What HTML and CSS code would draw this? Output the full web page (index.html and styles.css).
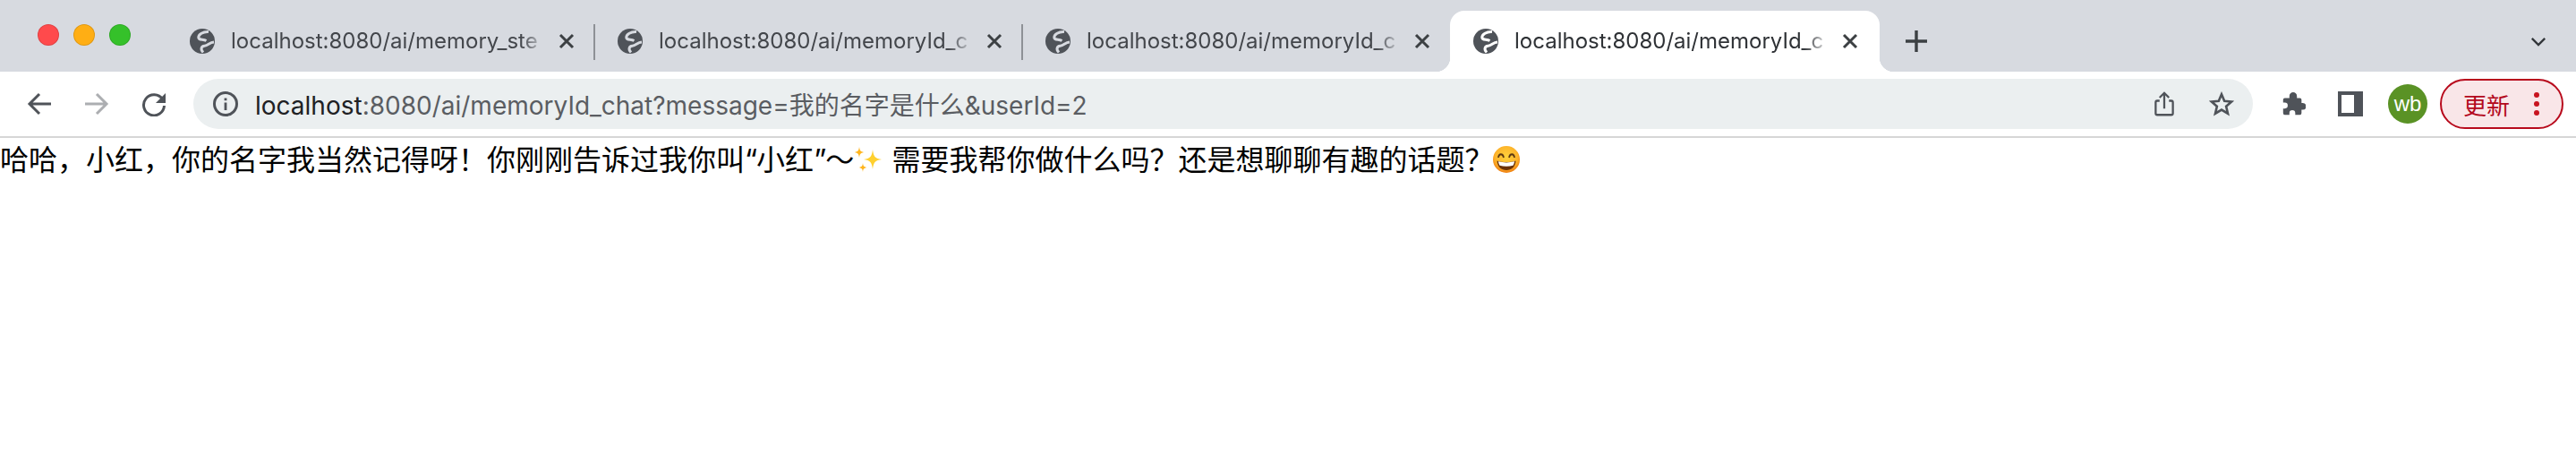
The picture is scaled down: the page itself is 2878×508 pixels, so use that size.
FILE: index.html
```html
<!DOCTYPE html>
<html lang="zh-CN">
<head>
<meta charset="utf-8">
<title>localhost:8080/ai/memoryId_chat</title>
<link rel="stylesheet" href="styles.css">
</head>
<body>
<svg class="defs" width="0" height="0" aria-hidden="true">
  <symbol id="globe" viewBox="0 0 28 28">
    <circle cx="14" cy="14" r="14" fill="#4f5359"/>
    <path class="land" d="M21 3.500C15 3 9.500 6.500 9.800 10c.3 3 5.200 1.500 8.700 3.500M27 15c-5 .2-6.500 4-10.500 4.200C13 19.500 11.500 23 15 26.500" fill="none" stroke-width="3"/>
  </symbol>
  <symbol id="x" viewBox="0 0 24 24">
    <path d="M5 5l14 14M19 5L5 19" fill="none" stroke="currentColor" stroke-width="3"/>
  </symbol>
</svg>

<header class="tabstrip">
  <div class="lights">
    <span class="light red"></span>
    <span class="light amber"></span>
    <span class="light green"></span>
  </div>
  <div class="tabs">
    <div class="tab">
      <svg class="favicon"><use href="#globe"/></svg>
      <span class="tab-title">localhost:8080/ai/memory_ste</span>
      <svg class="tab-close"><use href="#x"/></svg>
    </div>
    <span class="tab-sep"></span>
    <div class="tab">
      <svg class="favicon"><use href="#globe"/></svg>
      <span class="tab-title">localhost:8080/ai/memoryId_c</span>
      <svg class="tab-close"><use href="#x"/></svg>
    </div>
    <span class="tab-sep"></span>
    <div class="tab">
      <svg class="favicon"><use href="#globe"/></svg>
      <span class="tab-title">localhost:8080/ai/memoryId_c</span>
      <svg class="tab-close"><use href="#x"/></svg>
    </div>
    <div class="tab active">
      <svg class="favicon"><use href="#globe"/></svg>
      <span class="tab-title">localhost:8080/ai/memoryId_c</span>
      <svg class="tab-close"><use href="#x"/></svg>
    </div>
    <svg class="new-tab" viewBox="0 0 28 28"><path d="M14 2v24M2 14h24" fill="none" stroke="currentColor" stroke-width="3.400"/></svg>
  </div>
  <svg class="tab-menu" viewBox="0 0 20 12"><path d="M2 2l8 8 8-8" fill="none" stroke="currentColor" stroke-width="2.600"/></svg>
</header>

<nav class="toolbar">
  <button class="tool"><svg class="ico" viewBox="0 0 28 28"><path d="M27 14H3M14 3L3 14l11 11" fill="none" stroke="currentColor" stroke-width="3"/></svg></button>
  <button class="tool off"><svg class="ico" viewBox="0 0 28 28"><path d="M1 14h24M14 3l11 11-11 11" fill="none" stroke="currentColor" stroke-width="3"/></svg></button>
  <button class="tool"><svg class="ico" viewBox="0 0 28 28"><path d="M23.600 9A11.500 11.500 0 1 0 25.500 16" fill="none" stroke="currentColor" stroke-width="3"/><path d="M27 2v11H16z" fill="currentColor"/></svg></button>
  <div class="omnibox">
    <svg class="ico info" viewBox="0 0 28 28"><circle cx="14" cy="14" r="12.500" fill="none" stroke="currentColor" stroke-width="3"/><path d="M12.600 12.500h2.800V21h-2.800zM12.600 7.500h2.800v2.800h-2.800z" fill="currentColor"/></svg>
    <div class="url"><span class="host">localhost</span>:8080/ai/memoryId_chat?message=<span class="cjk">我的名字是什么</span>&amp;userId=2</div>
    <button class="tool"><svg class="ico" viewBox="0 0 28 32"><path d="M8 12H5a2 2 0 0 0-2 2v14a2 2 0 0 0 2 2h18a2 2 0 0 0 2-2V14a2 2 0 0 0-2-2h-3M14 22V3M8 8l6-6 6 6" fill="none" stroke="currentColor" stroke-width="2.600"/></svg></button>
    <button class="tool"><svg class="ico" viewBox="0 0 30 30"><path d="M15 3.500l3.400 8 8.600.8-6.500 5.700 2 8.500-7.500-4.500-7.500 4.500 2-8.500L3 12.300l8.600-.8z" fill="none" stroke="currentColor" stroke-width="2.800" stroke-linejoin="miter"/></svg></button>
  </div>
  <div class="actions">
    <button class="tool"><svg class="ico" viewBox="0 0 28 30"><path d="M2 10a2 2 0 0 1 2-2h5.500V5.500a4.500 4.500 0 0 1 9 0V8H22a2 2 0 0 1 2 2v4h1.500a4 4 0 0 1 0 8H24v4a2 2 0 0 1-2 2h-5.500v-2a3.500 3.500 0 0 0-7 0v2H4a2 2 0 0 1-2-2v-5.500h2a3.500 3.500 0 0 0 0-7H2z" fill="currentColor"/></svg></button>
    <button class="tool"><span class="panel"></span></button>
    <button class="tool"><span class="avatar">wb</span></button>
    <button class="update">更新<span class="dots"><i></i><i></i><i></i></span></button>
  </div>
</nav>

<main class="content">哈哈，小红，你的名字我当然记得呀！你刚刚告诉过我你叫<span class="quote">“</span>小红<span class="quote">”</span>～<svg class="emoji sparkles" viewBox="0 0 35 32"><path d="M21 3c.9 7.500 2.500 10 10 11-7.500 1-9.100 3.500-10 11-.9-7.500-2.500-10-10-11 7.500-1 9.100-3.500 10-11z" fill="#ffd02e"/><path d="M6 0c.6 4 1.200 5 5 6-3.800 1-4.400 2-5 6-.6-4-1.200-5-5-6 3.800-1 4.400-2 5-6zM10 18c.5 3.500 1 4.200 4.500 5-3.500.8-4 1.500-4.500 5-.5-3.500-1-4.200-4.500-5 3.500-.8 4-1.500 4.500-5z" fill="#ffb51f"/></svg> 需要我帮你做什么吗？还是想聊聊有趣的话题？<svg class="emoji grin" viewBox="0 0 30 30"><defs><radialGradient id="face" cx="50%" cy="40%" r="60%"><stop offset="0" stop-color="#ffd23c"/><stop offset=".7" stop-color="#fdb32a"/><stop offset="1" stop-color="#ee7d10"/></radialGradient></defs><circle cx="15" cy="15" r="15" fill="url(#face)"/><path d="M6 13c.6-5 5-5 6 0M18 13c1-5 5.400-5 6 0" fill="none" stroke="#5e3a12" stroke-width="1.800"/><path d="M4.500 16.500c6 2 15 2 21 0-.5 7-5 10.500-10.500 10.500S5 23.500 4.500 16.500z" fill="#6b3208"/><path d="M6 17.300c5.500 1.500 12.500 1.500 18 0-.2 2-.8 3.400-1.500 4.500-4.500 1.200-10.500 1.200-15 0-.7-1.100-1.300-2.500-1.500-4.500z" fill="#fff"/></svg></main>
</body>
</html>
```
FILE: styles.css
```css
* { box-sizing: border-box; }
html, body { margin: 0; padding: 0; background: #fff; }
body { width: 2878px; height: 508px; overflow: hidden; font-family: Inter, "Noto Sans CJK SC", sans-serif; }
.defs { display: block; height: 0; }

.tabstrip { height: 80px; background: #d7dae0; display: flex; position: relative; }
.lights { width: 186px; padding: 27px 0 0 42px; display: flex; gap: 16px; flex: none; }
.light { width: 24px; height: 24px; border-radius: 50%; border: 1px solid rgba(0,0,0,.12); }
.red { background: #ff4a4c; }
.amber { background: #ffae14; }
.green { background: #35c12a; }

.tabs { display: flex; align-items: flex-end; height: 80px; flex: 1; }
.tab { width: 478px; height: 68px; flex: none; display: flex; align-items: center; padding: 0 0 0 26px; position: relative; --land: #d7dae0; color: #43464b; }
.tab-sep { width: 2px; height: 40px; margin: 0 -1px 13px -1px; background: #8e9196; flex: none; position: relative; }
.favicon { width: 28px; height: 28px; flex: none; }
.land { stroke: var(--land); }
.tab-title { margin-left: 18px; width: 352px; flex: none; font-size: 24px; line-height: 32px; white-space: nowrap; overflow: hidden; -webkit-mask-image: linear-gradient(to right, #000 92%, transparent 100%); mask-image: linear-gradient(to right, #000 92%, transparent 100%); }
.tab-close { width: 24px; height: 24px; margin-left: 11px; flex: none; color: #3c4043; }
.tab.active { width: 480px; background: #fff; border-radius: 16px 16px 0 0; --land: #fff; color: #2f3236; }
.tab.active::before, .tab.active::after { content: ""; position: absolute; bottom: 0; width: 16px; height: 16px; }
.tab.active::before { left: -16px; background: radial-gradient(circle at 0 0, transparent 16px, #fff 16.5px); }
.tab.active::after { right: -16px; background: radial-gradient(circle at 100% 0, transparent 16px, #fff 16.5px); }
.new-tab { width: 28px; height: 28px; margin: 0 0 20px 27px; color: #3c4043; flex: none; }
.tab-menu { position: absolute; left: 2827px; top: 41px; width: 18px; height: 11px; color: #32363a; }

.toolbar { height: 74px; padding: 8px 14px 0 12px; display: flex; align-items: flex-start; border-bottom: 2px solid #d6d6d6; background: #fff; }
.tool { width: 64px; height: 56px; padding: 0; border: 0; background: none; display: flex; align-items: center; justify-content: center; color: #4f5359; flex: none; }
.tool.off { color: #acaeb1; }
.ico { width: 28px; height: 28px; }
.omnibox { flex: 1; height: 56px; margin-left: 12px; border-radius: 28px; background: #ebeff0; display: flex; align-items: center; padding: 0 3px 0 22px; }
.info { color: #4f5359; flex: none; }
.url { flex: 1; margin-left: 19px; font-size: 28px; color: #5a5d62; white-space: nowrap; }
.host { color: #202124; }
.cjk { font-family: "Noto Sans CJK SC", sans-serif; }
.actions { display: flex; align-items: flex-start; margin-left: 13px; }
.panel { width: 28px; height: 28px; border: 4px solid #4f5359; border-right-width: 10px; background: #fff; display: block; }
.avatar { width: 44px; height: 44px; border-radius: 50%; background: #5a9225; color: #fff; font: 24px "Liberation Sans", sans-serif; display: flex; align-items: center; justify-content: center; }
.update { width: 138px; height: 56px; margin-left: 4px; border: 2px solid #b80a1c; border-radius: 28px; background: #f9e6e8; color: #b3081c; font: 26px "Noto Sans CJK SC", sans-serif; display: flex; align-items: center; padding: 0 0 0 24px; }
.dots { display: flex; flex-direction: column; gap: 4px; margin-left: 27px; }
.dots i { width: 6px; height: 6px; border-radius: 50%; background: #c8141f; display: block; }

.content { font: 32px/40px "Noto Sans CJK SC", sans-serif; color: #000; padding-top: 2px; white-space: nowrap; height: 100px; }
.quote { font-family: Inter, sans-serif; letter-spacing: -1px; }
.emoji { display: inline-block; }
.sparkles { width: 35px; height: 32px; vertical-align: -6px; }
.grin { width: 30px; height: 30px; vertical-align: -3px; }
```
